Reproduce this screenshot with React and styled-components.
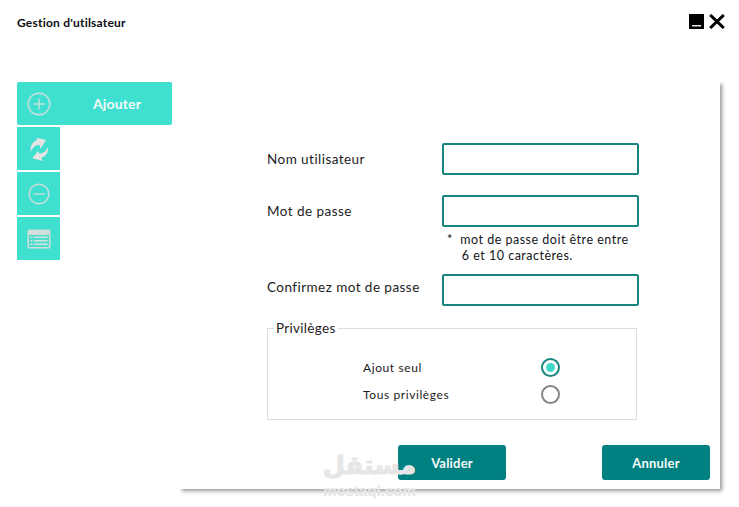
import React from "react";
import styled, { createGlobalStyle } from "styled-components";

const Global = createGlobalStyle`
  html, body { margin: 0; padding: 0; background: #fff; }
  body { font-family: "Lato", "Liberation Sans", sans-serif; color: #111; }
  * { box-sizing: border-box; }
`;

const Page = styled.div`
  position: relative;
  width: 739px;
  height: 507px;
  overflow: hidden;
  background: #fff;
`;

const TopBar = styled.header`
  height: 82px;
  padding: 14px 14px 0 17px;
  display: flex;
  justify-content: space-between;
  align-items: flex-start;
`;

const Title = styled.h1`
  margin: 0;
  font-size: 12px;
  line-height: 17px;
  font-weight: 700;
  letter-spacing: 0.22px;
  color: #0c0c14;
`;

const WindowControls = styled.div`
  display: flex;
  gap: 5px;
  align-items: center;
`;

const Body = styled.div`
  display: flex;
  padding-left: 17px;
`;

const Sidebar = styled.nav`
  width: 155px;
  margin-right: 8px;
  display: flex;
  flex-direction: column;
  align-items: flex-start;
  gap: 2px;
`;

const NavItem = styled.div`
  width: ${(p) => (p.$wide ? "155px" : "43px")};
  height: 43px;
  background: #40e0d0;
  border-radius: ${(p) => (p.$wide ? "2px" : "0")};
  display: flex;
  align-items: center;
  color: #fff;
`;

const NavIcon = styled.span`
  width: 43px;
  flex: none;
  height: 43px;
  display: flex;
  align-items: center;
  justify-content: center;
`;

const NavLabel = styled.span`
  margin-left: 33px;
  font-size: 14px;
  font-weight: 700;
  color: #f4fbfa;
  letter-spacing: 0.15px;
`;

const Panel = styled.main`
  width: 540px;
  height: 407px;
  background: #fff;
  box-shadow: 2px 2px 4px rgba(0, 0, 0, 0.42);
  clip-path: inset(0 -10px -10px 0);
  padding: 61px 10px 9px 87px;
  display: flex;
  flex-direction: column;
`;

const Row = styled.div`
  display: flex;
  align-items: flex-start;
  margin-bottom: ${(p) => p.$gap}px;
`;

const Label = styled.label`
  width: 175px;
  flex: none;
  font-size: 13.5px;
  line-height: 18px;
  padding-top: ${(p) => p.$top ?? 7}px;
  color: #1c1c24;
  letter-spacing: 0.45px;
  white-space: nowrap;
`;

const Input = styled.input`
  width: 197px;
  height: 32px;
  border: 2px solid #17857f;
  border-radius: 2px;
  background: #fff;
  outline: none;
`;

const Hint = styled.p`
  margin: 0 0 10px 180px;
  font-size: 12.5px;
  line-height: 16px;
  color: #15151c;
  letter-spacing: 0.5px;
  white-space: pre;
`;

const Fieldset = styled.fieldset`
  width: 370px;
  height: 100px;
  margin: 14px 0 0;
  padding: 0;
  border: 1px solid #dcdcdc;
  position: relative;
`;

const Legend = styled.legend`
  margin-left: 6px;
  padding: 0 2px;
  font-size: 13.5px;
  line-height: 16px;
  letter-spacing: 0.3px;
  color: #1c1c24;
`;

const RadioList = styled.div`
  display: flex;
  flex-direction: column;
  gap: 7px;
  padding: 21px 0 0 95px;
`;

const RadioRow = styled.div`
  display: flex;
  align-items: center;
  height: 20px;
`;

const RadioLabel = styled.span`
  width: 178px;
  font-size: 12px;
  letter-spacing: 0.6px;
  color: #1c1c24;
`;

const Radio = styled.span`
  width: 19px;
  height: 19px;
  border-radius: 50%;
  border: 2px solid ${(p) => (p.$checked ? "#17857f" : "#858585")};
  display: flex;
  align-items: center;
  justify-content: center;
  &::after {
    content: "";
    width: 9px;
    height: 9px;
    border-radius: 50%;
    background: ${(p) => (p.$checked ? "#40d8c8" : "transparent")};
  }
`;

const Actions = styled.div`
  margin-top: auto;
  display: flex;
  justify-content: space-between;
  padding-left: 131px;
`;

const Button = styled.button`
  width: 108px;
  height: 35px;
  padding: 0;
  border: none;
  border-radius: 3px;
  background: #008080;
  color: #f5fbfb;
  font-family: "Lato", "Liberation Sans", sans-serif;
  font-size: 13px;
  font-weight: 700;
  letter-spacing: 0.2px;
`;

const Watermark = styled.div`
  position: absolute;
  left: 320px;
  top: 450px;
  width: 99px;
  text-align: center;
  color: #e6e6e6;
  pointer-events: none;
`;

const WatermarkArabic = styled.div`
  font-family: "DejaVu Sans", sans-serif;
  font-size: 25.5px;
  line-height: 30px;
  font-weight: 700;
  -webkit-text-stroke: 1px #e6e6e6;
`;

const WatermarkLatin = styled.div`
  margin-top: 4px;
  font-family: "Liberation Sans", sans-serif;
  font-size: 15px;
  line-height: 14px;
  font-weight: 700;
`;

const stroke = { fill: "none", stroke: "#c9dfdb", strokeWidth: 1.4 };

const PlusIcon = () => (
  <svg width="24" height="24" viewBox="0 0 24 24" {...stroke}>
    <circle cx="12" cy="12" r="10.8" />
    <path d="M12 6.500v11M6.500 12h11" />
  </svg>
);

const MinusIcon = () => (
  <svg width="22" height="22" viewBox="0 0 22 22" {...stroke}>
    <circle cx="11" cy="11" r="9.800" />
    <path d="M5.500 11h11" />
  </svg>
);

const SyncIcon = () => (
  <svg width="20" height="26" viewBox="85 195 60 78" fill="#e4e4e4">
    <path d="M90 243C88 222 98 210 110 208L106 200L136 207L120 233L116 221C104 222 95 230 90 243Z" />
    <path d="M142 228C144 248 132 258 122 260L126 270L95 262L112 240L116 248C128 247 137 240 142 228Z" />
  </svg>
);

const ListIcon = () => (
  <svg width="24" height="20" viewBox="0 0 24 20">
    <rect x="0.500" y="0.500" width="23" height="19" rx="1.500" fill="#cfdedb" />
    <rect x="2" y="6" width="20" height="12" fill="#4fdccd" />
    <path d="M3.500 8.200h2M3.500 11.800h2M3.500 15.200h2M7 8.200h13.500M7 11.800h13.500M7 15.200h13.500" stroke="#d3e3e0" strokeWidth="1.500" fill="none" />
  </svg>
);

const MinimizeIcon = () => (
  <svg width="15" height="15" viewBox="0 0 15 15">
    <rect width="15" height="15" fill="#000" />
    <rect x="3" y="11" width="9" height="1.500" fill="#f2e8e8" />
  </svg>
);

const CloseIcon = () => (
  <svg width="16" height="15" viewBox="0 0 16 15">
    <path d="M1.200 1L14.800 14M14.800 1L1.200 14" stroke="#000" strokeWidth="3" fill="none" />
  </svg>
);

export default function App() {
  return (
    <Page>
      <Global />
      <TopBar>
        <Title>Gestion d'utilsateur</Title>
        <WindowControls>
          <MinimizeIcon />
          <CloseIcon />
        </WindowControls>
      </TopBar>
      <Body>
        <Sidebar>
          <NavItem $wide>
            <NavIcon><PlusIcon /></NavIcon>
            <NavLabel>Ajouter</NavLabel>
          </NavItem>
          <NavItem><NavIcon><SyncIcon /></NavIcon></NavItem>
          <NavItem><NavIcon><MinusIcon /></NavIcon></NavItem>
          <NavItem><NavIcon><ListIcon /></NavIcon></NavItem>
        </Sidebar>
        <Panel>
          <Row $gap={20}>
            <Label>Nom utilisateur</Label>
            <Input type="text" />
          </Row>
          <Row $gap={5}>
            <Label>Mot de passe</Label>
            <Input type="password" />
          </Row>
          <Hint>{"*  mot de passe doit être entre\n    6 et 10 caractères."}</Hint>
          <Row $gap={0}>
            <Label $top={4}>Confirmez mot de passe</Label>
            <Input type="password" />
          </Row>
          <Fieldset>
            <Legend>Privilèges</Legend>
            <RadioList>
              <RadioRow>
                <RadioLabel>Ajout seul</RadioLabel>
                <Radio $checked />
              </RadioRow>
              <RadioRow>
                <RadioLabel>Tous privilèges</RadioLabel>
                <Radio />
              </RadioRow>
            </RadioList>
          </Fieldset>
          <Actions>
            <Button>Valider</Button>
            <Button>Annuler</Button>
          </Actions>
        </Panel>
      </Body>
      <Watermark>
        <WatermarkArabic>مستقل</WatermarkArabic>
        <WatermarkLatin>mostaql.com</WatermarkLatin>
      </Watermark>
    </Page>
  );
}
